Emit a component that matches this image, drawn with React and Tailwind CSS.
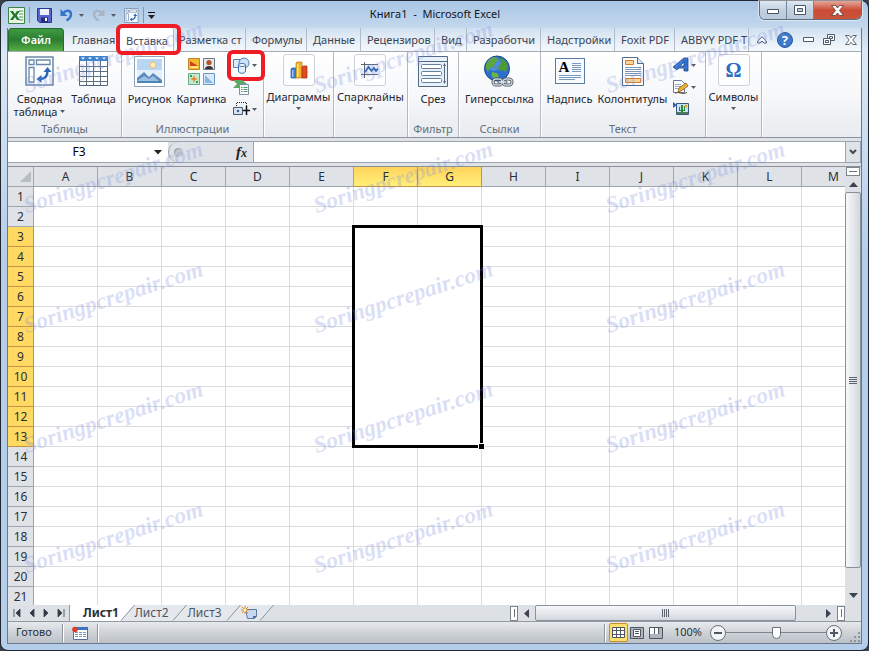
import React from 'react';
import clsx from 'clsx';

const columns = ['A', 'B', 'C', 'D', 'E', 'F', 'G', 'H', 'I', 'J', 'K', 'L', 'M'];
const rows = Array.from({ length: 21 }, (_, i) => i + 1);

const tabs = [
    { label: 'Главная', width: 'w-14 pl-2' },
    { label: 'Вставка', width: 'w-[54px] pl-[6px]', active: true },
    { label: 'Разметка ст', width: 'w-[72px] pl-[5px]' },
    { label: 'Формулы', width: 'w-[61px] pl-[6px]' },
    { label: 'Данные', width: 'w-[54px] pl-[6px]' },
    { label: 'Рецензиров', width: 'w-[74px] pl-[6px]' },
    { label: 'Вид', width: 'w-8 pl-[6px]' },
    { label: 'Разработчи', width: 'w-[74px] pl-[6px]' },
    { label: 'Надстройки', width: 'w-[74px] pl-[6px]' },
    { label: 'Foxit PDF', width: 'w-[60px] pl-[6px]' },
    { label: 'ABBYY PDF T', width: 'w-[74px] pl-[6px]' },
];

const watermarks = [92, 212, 332, 452, 572].flatMap(top => [25, 315, 607].map(left => ({ top, left })));

function Caret({ className }) {
    return (
        <svg viewBox="0 0 5 3" className={clsx('w-[5px] h-[3px] shrink-0', className)} fill="#555c66">
            <path d="M0 0h5L2.500 3z" />
        </svg>
    );
}

function ExcelIcon() {
    return (
        <svg width="17" height="17" viewBox="0 0 17 17">
            <path d="M.5.5h16v16H.5z" fill="#e6f4e3" stroke="#3d8446" />
            <path d="M10 2h5v13h-5z" fill="#fff" />
            <path d="M11 4h4M11 7h4M11 10h4M11 13h4" stroke="#7ab880" strokeWidth="1.500" />
            <path d="M2 4h3l2 3 2-3h3L8.700 8.500 12 13H9l-2-3-2 3H2l3.300-4.500z" fill="#1e7a2c" />
        </svg>
    );
}

function SaveIcon() {
    return (
        <svg width="15" height="15" viewBox="0 0 15 15">
            <path d="M.5.5h14v14h-12l-2-2z" fill="#5a62d0" stroke="#2c3590" />
            <path d="M3 1h9v6H3z" fill="#eef3fb" />
            <path d="M4 9.500h7V14H4z" fill="#26306f" />
            <path d="M8 10h2v3H8z" fill="#fff" />
        </svg>
    );
}

function UndoIcon({ color, flip }) {
    return (
        <svg width="13" height="14" viewBox="0 0 13 14" fill="none">
            <g transform={flip ? 'translate(13 0) scale(-1 1)' : undefined}>
                <path d="M3 5.500C6 1.500 11 2 11 6.500c0 3-2 4.500-4.500 6" stroke={color} strokeWidth="2.400" />
                <path d="M.5 1v7h7z" fill={color} />
            </g>
        </svg>
    );
}

function PivotIcon({ size }) {
    return (
        <svg width={size} height={size} viewBox="0 0 30 30" fill="none">
            <path d="M1 1h27v28H1z" fill="#fafcff" stroke="#6b87a8" strokeWidth="1.500" />
            <path d="M4 4h5v4.500H4zM11.500 4H25v4.500H11.500zM4 11.500h5V26H4z" fill="#fff" stroke="#6b87a8" strokeWidth="1.300" />
            <path d="M15 23c5 0 7.500-3 7.500-8" stroke="#2d66b8" strokeWidth="2.400" />
            <path d="M18.500 16l4-5 4 5zM16.500 19l-5 4 5 4z" fill="#2d66b8" />
        </svg>
    );
}

function TableIcon() {
    return (
        <svg width="31" height="32" viewBox="0 0 31 32">
            <path d="M1.500 1.500h28v29h-28z" fill="#fff" stroke="#51677f" />
            <path d="M1 1h29v5H1z" fill="#3f83cf" />
            <path d="M1.500 11.500h28M1.500 16.500h28M1.500 21.500h28M1.500 26.500h28M8.500 6v24M15.500 6v24M22.500 6v24" stroke="#5d7084" />
            <path d="M3 2.500h4l-2 2zM10 2.500h4l-2 2zM17 2.500h4l-2 2zM24 2.500h4l-2 2z" fill="#fff" />
        </svg>
    );
}

function PictureIcon() {
    return (
        <svg width="31" height="31" viewBox="0 0 31 31">
            <path d="M.5.5h30v30H.5z" fill="#fff" stroke="#8fa3b8" />
            <path d="M3 3h25v22H3z" fill="#b9d6f3" />
            <path d="M3 14h25v11H3z" fill="#e3effa" />
            <circle cx="19" cy="9" r="3" fill="#fff3c4" stroke="#f2b661" />
            <path d="M3 22l7-6 5 5 4-4 9 7v1H3z" fill="#5c8cbd" />
            <path d="M3 25l7-5 5 3 4-3 6 5z" fill="#9dc0e0" />
            <path d="M3 25h25v2H3z" fill="#4a87b8" />
        </svg>
    );
}

function ClipArtIcon() {
    return (
        <svg width="27" height="27" viewBox="0 0 27 27">
            <path d="M.5.5h11v11H.5z" fill="#f7ba2e" stroke="#bb8424" />
            <path d="M2 3l8 5H2z" fill="#d2401f" />
            <path d="M2 9h8" stroke="#ffe27d" strokeWidth="2" />
            <path d="M15.500.5h11v11h-11z" fill="#e4e7ec" stroke="#6c7684" />
            <circle cx="21" cy="4.500" r="2.600" fill="#b6522a" />
            <path d="M17 11c0-4 8-4 8 0z" fill="#3a3029" />
            <path d="M.5 15.500h11v11H.5z" fill="#c6ead0" stroke="#67a98a" />
            <path d="M6 17l1 3 3 1-3 1-1 3-1-3-3-1 3-1z" fill="#f08127" />
            <path d="M2 17h2v2H2zM8 23h2v2H8z" fill="#2e9e54" />
            <path d="M15.500 15.500h11v11h-11z" fill="#d8eafb" stroke="#6d96c5" />
            <path d="M17 17l8 8h-8z" fill="#8ab6e6" />
        </svg>
    );
}

function ShapesIcon() {
    return (
        <svg width="17" height="17" viewBox="0 0 17 17">
            <path d="M.5 2.500h9v8h-9z" fill="#dbe9f8" stroke="#5580b3" />
            <circle cx="11" cy="6" r="5" fill="#cfe1f5" stroke="#5580b3" />
            <path d="M5.500 8v6c0 3 7 3 7 0V8z" fill="#e4effb" stroke="#4172ad" />
            <ellipse cx="9" cy="8" rx="3.500" ry="1.500" fill="#fff" stroke="#4172ad" />
        </svg>
    );
}

function SmartArtIcon() {
    return (
        <svg width="17" height="16" viewBox="0 0 17 16">
            <path d="M0 1h9l5 4-5 4H0l4-4z" fill="#5ca868" />
            <path d="M6.500 5.500h9v10h-9z" fill="#fff" stroke="#8292a6" />
            <path d="M8 8.500h1.500M8 10.500h1.500M8 12.500h1.500M10.500 8.500h4M10.500 10.500h4M10.500 12.500h4" stroke="#4d9460" />
        </svg>
    );
}

function ScreenshotIcon() {
    return (
        <svg width="17" height="14" viewBox="0 0 17 14">
            <path d="M3.500 4V.5h10V4" fill="none" stroke="#222" strokeDasharray="1 1" />
            <path d="M.5 5.500h9v7h-9z" fill="#d5dfea" stroke="#4b5d73" />
            <circle cx="5" cy="9" r="2" fill="#3c65a0" stroke="#fff" />
            <path d="M13.500 4v9M10 8.500h7" stroke="#111" strokeWidth="1.500" />
        </svg>
    );
}

function ChartIcon() {
    return (
        <svg width="18" height="18" viewBox="0 0 18 18">
            <path d="M1 8l1-1h4v10H1z" fill="#3a7bd5" stroke="#245aa5" strokeWidth=".7" />
            <path d="M6 2l1-1h5v16H6z" fill="#f0b428" stroke="#b27a12" strokeWidth=".7" />
            <path d="M7 3h1.500v13H7z" fill="#ffe27c" />
            <path d="M12 6l1-1h4v12h-5z" fill="#e04b20" stroke="#a22c10" strokeWidth=".7" />
            <path d="M2 9h1.500v7H2z" fill="#9cc4f4" />
        </svg>
    );
}

function SparklineIcon() {
    return (
        <svg width="18" height="16" viewBox="0 0 18 16" fill="none">
            <path d="M4 2h13v10H4z" fill="#eaf2fb" />
            <path d="M3.500 0v16M0 2.500h17M0 12.500h17" stroke="#5b6674" />
            <path d="M4 10l3.500-5 3 4 2.500-3 2 3 2-2.500" stroke="#2963b5" strokeWidth="1.700" />
        </svg>
    );
}

function SlicerIcon() {
    return (
        <svg width="30" height="31" viewBox="0 0 30 31" fill="none">
            <path d="M.5.5h29v30H.5z" fill="#e8f0f9" stroke="#536b88" />
            <path d="M1 5.500h28" stroke="#536b88" />
            <rect x="3.500" y="8.500" width="20" height="4" rx="1" fill="#fff" stroke="#6480a1" />
            <rect x="3.500" y="15.500" width="20" height="4" rx="1" fill="#fff" stroke="#6480a1" />
            <rect x="3.500" y="22.500" width="20" height="4" rx="1" fill="#fff" stroke="#6480a1" />
            <path d="M26.500 9v17" stroke="#536b88" />
            <path d="M25 10l1.500-3 1.500 3zM25 25l1.500 3 1.500-3z" fill="#536b88" />
        </svg>
    );
}

function GlobeIcon() {
    return (
        <svg width="32" height="32" viewBox="0 0 32 32">
            <circle cx="14" cy="13.500" r="12.500" fill="#2d6fcf" stroke="#1d4684" />
            <circle cx="11" cy="9" r="7" fill="#6ba7ef" opacity=".5" />
            <path d="M3 10c2-5 6-8 10-8l2 3-3 3-1 4-4 1-2 4c-2-2-2-5-2-7z" fill="#5ca63c" />
            <path d="M17 3c4 1 7 4 8 8l-2 6-4-2-3 1-1-4 3-3z" fill="#4f9a34" />
            <path d="M9 17l5 1 2 3-3 4c-3-1-5-4-4-8z" fill="#6ab548" />
            <g fill="none" strokeLinecap="round">
                <rect x="10" y="24" width="9" height="6" rx="3" stroke="#46515e" strokeWidth="3" />
                <rect x="20" y="24" width="9" height="6" rx="3" stroke="#46515e" strokeWidth="3" />
                <path d="M16 27h7" stroke="#46515e" strokeWidth="3" />
                <rect x="10" y="24" width="9" height="6" rx="3" stroke="#c9d3de" strokeWidth="1.300" />
                <rect x="20" y="24" width="9" height="6" rx="3" stroke="#c9d3de" strokeWidth="1.300" />
                <path d="M16 27h7" stroke="#e3e9f0" strokeWidth="1.300" />
            </g>
        </svg>
    );
}

function TextBoxIcon() {
    return (
        <span className="w-[30px] h-[26px] bg-[#f7faff] border border-[#5b7a9e] relative block">
            <span className="absolute left-[3px] top-0 font-['Liberation_Serif',serif] font-bold text-[15px] leading-4 text-black">A</span>
            <svg width="28" height="24" viewBox="0 0 28 24" stroke="#7b9ac0" className="block">
                <path d="M16 4.500h9M16 6.500h9M16 8.500h9M16 10.500h9M16 12.500h9M3 16.500h22M3 18.500h22M3 20.500h16" />
            </svg>
        </span>
    );
}

function HeaderFooterIcon() {
    return (
        <svg width="22" height="29" viewBox="0 0 22 29">
            <path d="M.5.5h15l6 6v22H.5z" fill="#fff" stroke="#51698a" />
            <path d="M15.500.5v6h6" fill="#d9e5f3" stroke="#51698a" />
            <path d="M3.500 3.500h8v4h-8zM3.500 21.500h15v4h-15z" fill="#fbd49b" stroke="#d97a1c" />
            <path d="M3 10.500h16M3 12.500h16M3 14.500h16M3 16.500h16M3 18.500h16" stroke="#7f97b5" />
        </svg>
    );
}

function WordArtIcon() {
    return (
        <svg width="16" height="16" viewBox="0 0 16 16">
            <path d="M0 10L11 1h4v13h-4v-3H6l-2 2zM11 5L7 9h4z" fill="#2f70cc" fillRule="evenodd" stroke="#1b478c" strokeWidth=".8" />
        </svg>
    );
}

function SignatureIcon() {
    return (
        <svg width="16" height="15" viewBox="0 0 16 15">
            <path d="M.5.500h8l3 3v9H.5z" fill="#fff" stroke="#647a96" />
            <path d="M2 4.500h6M2 6.500h7M2 8.500h5" stroke="#9aacc2" />
            <path d="M5 12l1-4 7-5 2 3-7 5z" fill="#efb33b" stroke="#8a5a18" strokeWidth=".8" />
            <path d="M2 13.500c4-3 6 2 12-1" stroke="#6b4a3a" fill="none" />
        </svg>
    );
}

function ObjectIcon() {
    return (
        <svg width="16" height="14" viewBox="0 0 16 14">
            <path d="M3.500 1.500h12v11h-12z" fill="#c7e2f4" stroke="#3d5876" />
            <path d="M0 0l4 3-4 3z" fill="#2d62b8" />
            <path d="M8 3h2v8H8zM6 5h1v3h4V4h1v5H6z" fill="#278a3b" />
            <circle cx="13" cy="4" r="1.500" fill="#f0a62c" />
            <path d="M4 10h11v2H4z" fill="#4c7a5a" />
        </svg>
    );
}

function NewSheetIcon() {
    return (
        <svg width="16" height="14" viewBox="0 0 16 14">
            <path d="M4.500 3.500h11v7l-2 2h-7z" fill="#c7d9f0" stroke="#5c79a0" />
            <path d="M12 13v-3h4z" fill="#466ca3" />
            <path d="M4 0v8M0 4h8M1 1l6 6M7 1L1 7" stroke="#e08a1d" />
            <circle cx="4" cy="4" r="1.600" fill="#fff3c6" />
        </svg>
    );
}

function MacroIcon() {
    return (
        <svg width="16" height="14" viewBox="0 0 16 14">
            <path d="M1.500 1.500h14v12h-14z" fill="#fff" stroke="#53719c" />
            <path d="M1 1h15v3H1z" fill="#3b74c2" />
            <path d="M3 6.500h3M7 6.500h3M11 6.500h3M3 8.500h3M7 8.500h3M11 8.500h3M3 10.500h3M7 10.500h3M11 10.500h3" stroke="#7a96be" />
            <circle cx="3" cy="3.500" r="2.800" fill="#d9402c" />
        </svg>
    );
}

function LargeButton({ icon, label, caret, boxed, className }) {
    return (
        <button className={clsx('flex flex-col items-center shrink-0 whitespace-nowrap text-[#1f2630]', className)}>
            <span
                className={clsx(
                    'flex items-center justify-center mt-[2px] mb-1',
                    boxed ? 'w-8 h-8 rounded-[3px] border border-[#cdd1d8] bg-white/70' : 'h-[34px]'
                )}
            >
                {icon}
            </span>
            <span className="leading-[13px]">{label}</span>
            {caret && <Caret className="mt-1" />}
        </button>
    );
}

function SmallButton({ icon, label, caret, marked }) {
    return (
        <button aria-label={label} className="relative flex items-center gap-[2px] h-[22px]">
            {icon}
            {caret && <Caret />}
            {marked && <span className="absolute -left-[6px] -top-1 w-[38px] h-[31px] rounded-md border-4 border-[#ee1c25]" />}
        </button>
    );
}

function Group({ title, className, children }) {
    return (
        <section className={clsx('flex flex-col shrink-0 border-r border-[#b4b9c1] shadow-[1px_0_0_#fff]', className)}>
            <div className="flex-1 flex justify-center">{children}</div>
            <div className="h-4 leading-4 text-center text-[#646e7c]">{title}</div>
        </section>
    );
}

function TitleBar() {
    return (
        <header className="h-[27px] flex items-start shrink-0">
            <div className="flex-1 flex items-center h-7 pl-px">
                <button aria-label="Excel"><ExcelIcon /></button>
                <span className="w-px h-4 bg-[#8797aa] mx-1" />
                <button aria-label="Сохранить" className="ml-[3px]"><SaveIcon /></button>
                <button aria-label="Отменить" className="ml-2 flex items-center gap-[6px]">
                    <UndoIcon color="#3773c9" /> <Caret />
                </button>
                <button aria-label="Вернуть" className="ml-2 flex items-center gap-[6px]">
                    <UndoIcon color="#a9b5c4" flip /> <Caret />
                </button>
                <button aria-label="Сводная таблица" className="ml-2"><PivotIcon size="15" /></button>
                <span className="w-px h-4 bg-[#8797aa] ml-1" />
                <button aria-label="Настройка панели" className="ml-1 flex flex-col items-center gap-[2px]">
                    <span className="w-[7px] h-px bg-black" />
                    <svg width="7" height="4" viewBox="0 0 7 4"><path d="M0 0h7L3.500 4z" fill="#222" /></svg>
                </button>
            </div>
            <h1 className="text-[11px] leading-[26px] text-[#10151c] whitespace-pre">Книга1  -  Microsoft Excel</h1>
            <div className="flex-1 flex justify-end">
                <div className="flex h-[19px] rounded-b-md border border-t-0 border-[#5d6d80] overflow-hidden shadow-[0_0_0_1px_#ffffff80]">
                    <button aria-label="Свернуть" className="w-[27px] flex items-center justify-center border-r border-[#74859a] bg-linear-to-b from-[#dfe8f2] via-[#c2d0e0] to-[#b9c9dc]">
                        <svg width="12" height="12" viewBox="0 0 12 12"><path d="M.5 5.500h11v4H.5z" fill="#fff" stroke="#4a5565" /></svg>
                    </button>
                    <button aria-label="Развернуть" className="w-[27px] flex items-center justify-center border-r border-[#74859a] bg-linear-to-b from-[#dfe8f2] via-[#c2d0e0] to-[#b9c9dc]">
                        <svg width="12" height="10" viewBox="0 0 12 10"><path fillRule="evenodd" d="M.5.5h11v9H.5zM3.500 3.500v3h5v-3z" fill="#fff" stroke="#4a5565" /></svg>
                    </button>
                    <button aria-label="Закрыть" className="w-[47px] flex items-center justify-center bg-linear-to-b from-[#e5a79b] via-[#cb4b35] to-[#c8543b]">
                        <svg width="13" height="11" viewBox="0 0 13 11"><path d="M.5.5h4l2 2.500 2-2.500h4l-4 5 4 5h-4l-2-2.500-2 2.500h-4l4-5z" fill="#fff" stroke="#5b3a3a" strokeWidth=".8" /></svg>
                    </button>
                </div>
            </div>
        </header>
    );
}

function TabBar() {
    return (
        <nav className="h-6 flex shrink-0 bg-linear-to-b from-white/20 to-white/70 border-b border-[#a5acb6] text-[#3b4450]">
            <button className="w-14 shrink-0 rounded-t-[4px] border border-b-0 border-[#256b2e] bg-linear-to-b from-[#3f9a42] via-[#2a7d31] to-[#57ae45] text-white text-center font-semibold">
                Файл
            </button>
            {tabs.map(tab => (
                <button
                    key={tab.label}
                    className={clsx(
                        'relative shrink-0 pt-[2px] text-left whitespace-nowrap border-r border-[#b3bcc8]',
                        tab.width,
                        tab.active && '-mb-px bg-white rounded-t-[3px]'
                    )}
                >
                    {tab.label}
                    {tab.active && <span className="absolute z-10 -left-1 -top-1 w-[65px] h-[31px] rounded-md border-4 border-[#ee1c25]" />}
                </button>
            ))}
            <div className="flex-1 flex items-center justify-between pl-2 pr-1">
                <button aria-label="Свернуть ленту">
                    <svg width="10" height="8" viewBox="0 0 10 8"><path d="M.7 5L5 .8 9.300 5v2H7L5 5 3 7H.7z" fill="#fff" stroke="#4d5a6a" /></svg>
                </button>
                <button aria-label="Справка" className="w-4 h-4 rounded-full bg-[#3f79c9] border border-[#2a5ba3] text-white font-bold text-[13px] leading-[14px]">?</button>
                <button aria-label="Свернуть книгу">
                    <svg width="11" height="5" viewBox="0 0 11 5"><path d="M.5.5h10v4H.5z" fill="#fff" stroke="#4d5a6a" /></svg>
                </button>
                <button aria-label="Восстановить книгу">
                    <svg width="12" height="11" viewBox="0 0 12 11" fill="#fff" stroke="#4d5a6a"><path d="M4.500.5h7v6h-7zM6.500 2.500h3v2h-3z" /><path d="M.5 4.500h7v6h-7zM2.500 6.500h3v2h-3z" /></svg>
                </button>
                <button aria-label="Закрыть книгу">
                    <svg width="12" height="10" viewBox="0 0 13 11"><path d="M.5.5h4l2 2.500 2-2.500h4l-4 5 4 5h-4l-2-2.500-2 2.500h-4l4-5z" fill="#fff" stroke="#4d5a6a" /></svg>
                </button>
            </div>
        </nav>
    );
}

function Ribbon() {
    return (
        <div className="h-[86px] flex shrink-0 bg-linear-to-b from-white via-[#f6f8fa] to-[#e8ebef] border-b border-[#8c929b]">
            <Group title="Таблицы" className="w-[114px]">
                <LargeButton
                    className="w-[58px]"
                    icon={<PivotIcon size="30" />}
                    label={<>Сводная<br /><span className="inline-flex items-center gap-[3px]">таблица <Caret /></span></>}
                />
                <LargeButton className="w-[50px]" icon={<TableIcon />} label="Таблица" />
            </Group>
            <Group title="Иллюстрации" className="w-[142px]">
                <LargeButton className="w-[50px]" icon={<PictureIcon />} label="Рисунок" />
                <LargeButton className="w-[54px]" icon={<ClipArtIcon />} label="Картинка" />
                <div className="flex flex-col pt-[2px] pl-1 pr-[4px]">
                    <SmallButton icon={<ShapesIcon />} label="Фигуры" caret marked />
                    <SmallButton icon={<SmartArtIcon />} label="SmartArt" />
                    <SmallButton icon={<ScreenshotIcon />} label="Снимок" caret />
                </div>
            </Group>
            <Group className="w-[70px]">
                <LargeButton boxed icon={<ChartIcon />} label="Диаграммы" caret />
            </Group>
            <Group className="w-[74px]">
                <LargeButton boxed icon={<SparklineIcon />} label="Спарклайны" caret />
            </Group>
            <Group title="Фильтр" className="w-[51px]">
                <LargeButton icon={<SlicerIcon />} label="Срез" />
            </Group>
            <Group title="Ссылки" className="w-[82px]">
                <LargeButton icon={<GlobeIcon />} label="Гиперссылка" />
            </Group>
            <Group title="Текст" className="w-[165px]">
                <LargeButton className="w-[50px]" icon={<TextBoxIcon />} label="Надпись" />
                <LargeButton className="w-[76px]" icon={<HeaderFooterIcon />} label="Колонтитулы" />
                <div className="flex flex-col pt-[2px] pl-[2px] pr-[6px]">
                    <SmallButton icon={<WordArtIcon />} label="WordArt" caret />
                    <SmallButton icon={<SignatureIcon />} label="Подпись" caret />
                    <SmallButton icon={<ObjectIcon />} label="Объект" />
                </div>
            </Group>
            <Group className="w-14">
                <LargeButton
                    boxed
                    icon={<span className="font-['Liberation_Serif',serif] font-bold text-[20px] leading-5 text-[#2b6cc4]">Ω</span>}
                    label="Символы"
                    caret
                />
            </Group>
        </div>
    );
}

function FormulaBar() {
    return (
        <div className="shrink-0 bg-[#dfe3e8] py-[3px] border-b border-[#8b9099]">
            <div className="flex h-[22px] border-y border-[#9aa3b0]">
                <label className="flex items-center w-40 bg-white pr-[5px]">
                    <input aria-label="Имя" defaultValue="F3" className="w-[142px] text-center text-[12px] text-black outline-none" />
                    <svg width="8" height="5" viewBox="0 0 8 5" className="ml-1"><path d="M0 0h8L4 4.500z" fill="#222" /></svg>
                </label>
                <div className="w-[85px] flex items-center justify-between rounded-l-full border-l border-[#9aa3b0] bg-[#dfe3e8] pl-[5px] pr-[6px]">
                    <span className="w-[9px] h-[9px] rounded-full bg-[#c3c8cf] shadow-[inset_1px_1px_1px_#9fa5ad]" />
                    <button aria-label="Вставить функцию" className="font-['Liberation_Serif',serif] italic font-bold text-[15px] leading-4 text-[#222]">
                        f<span className="text-[12px]">x</span>
                    </button>
                </div>
                <input aria-label="Строка формул" className="flex-1 min-w-0 bg-white border-l border-[#9aa3b0] outline-none" />
                <button aria-label="Развернуть строку" className="w-4 flex items-center justify-center border-x border-[#9aa3b0] bg-[#dfe3e8]">
                    <svg width="8" height="6" viewBox="0 0 8 6" fill="none"><path d="M1 1l3 3 3-3" stroke="#444b55" strokeWidth="2" /></svg>
                </button>
            </div>
        </div>
    );
}

function Sheet() {
    return (
        <div className="flex-1 min-w-0 relative overflow-hidden bg-white">
            <table className="table-fixed border-separate border-spacing-0 w-[858px] text-[#2b2f36] text-[12px] leading-[19px]">
                <thead>
                    <tr className="h-5">
                        <th className="w-[26px] p-0 bg-[#dfe3e8] border-r border-b border-[#a0a5ad]">
                            <svg width="11" height="11" viewBox="0 0 11 11" className="ml-[12px]"><path d="M11 0v11H0z" fill="#b7bcc3" /></svg>
                        </th>
                        {columns.map(col => (
                            <th
                                key={col}
                                className={clsx(
                                    'w-16 p-0 h-5 font-normal border-r border-b',
                                    col === 'F' || col === 'G'
                                        ? 'bg-linear-to-b from-[#ffd35c] to-[#fff07a] border-[#c39443]'
                                        : 'bg-[#dfe3e8] border-[#a0a5ad]'
                                )}
                            >
                                {col}
                            </th>
                        ))}
                    </tr>
                </thead>
                <tbody>
                    {rows.map(row => (
                        <tr key={row} className="h-5">
                            <th
                                className={clsx(
                                    'p-0 h-5 font-normal border-r border-b',
                                    row >= 3 && row <= 13 ? 'bg-[#ffd961] border-[#c39443]' : 'bg-[#dfe3e8] border-[#a0a5ad]'
                                )}
                            >
                                {row}
                            </th>
                            {columns.map(col => (
                                <td key={col} className="p-0 border-r border-b border-[#dadcdd]" />
                            ))}
                        </tr>
                    ))}
                </tbody>
            </table>
            {/* selected range F3:G13 */}
            <div className="absolute left-[344px] top-[58px] w-[131px] h-[223px] border-3 border-black bg-white">
                <span className="absolute -right-[5px] -bottom-[5px] w-[7px] h-[7px] bg-black border border-white" />
            </div>
        </div>
    );
}

function VerticalScroll() {
    return (
        <div className="w-4 shrink-0 flex flex-col items-center bg-[#dde1e6]">
            <div className="w-[14px] h-[9px] border border-[#7e848d] bg-white flex items-center justify-center">
                <span className="w-2 h-px bg-[#6a717b]" />
            </div>
            <button aria-label="Вверх" className="h-4 flex items-center">
                <svg width="9" height="5" viewBox="0 0 9 5"><path d="M0 5h9L4.500 0z" fill="#3c4350" /></svg>
            </button>
            <div className="w-full flex-1 rounded-[2px] border border-[#8b9199] bg-linear-to-r from-[#f7f8fa] to-[#d3d8df] flex flex-col items-center justify-center gap-px">
                <span className="w-2 h-px bg-[#5c636d]" />
                <span className="w-2 h-px bg-[#5c636d]" />
                <span className="w-2 h-px bg-[#5c636d]" />
                <span className="w-2 h-px bg-[#5c636d]" />
            </div>
            <button aria-label="Вниз" className="h-[37px] pt-[18px] flex items-center">
                <svg width="9" height="5" viewBox="0 0 9 5"><path d="M0 0h9L4.500 5z" fill="#3c4350" /></svg>
            </button>
        </div>
    );
}

function Slash({ left, right }) {
    return (
        <svg width="15" height="16" viewBox="0 0 15 16" className="shrink-0">
            <path d="M0 0h15v16H0z" fill={right} />
            <path d="M0 0h14L1 16H0z" fill={left} />
            <path d="M14.500 0L1 15.500" stroke="#8b929c" />
        </svg>
    );
}

function SheetTabs() {
    const arrows = [
        ['Первый лист', 'M1 0v8M7 0v8L3 4z'],
        ['Предыдущий лист', 'M6 0v8L2 4z'],
        ['Следующий лист', 'M2 0v8l4-4z'],
        ['Последний лист', 'M1 0v8l4-4zM7 0v8'],
    ];
    return (
        <div className="h-4 shrink-0 flex bg-[#dde1e6] border-b border-[#9299a3] box-content">
            <div className="w-[62px] flex items-center justify-between border-r border-[#9299a3] pr-1 pl-[5px]">
                {arrows.map(([label, d]) => (
                    <button key={label} aria-label={label}>
                        <svg width="8" height="8" viewBox="0 0 8 8"><path d={d} fill="#343b47" stroke="#343b47" strokeWidth=".8" /></svg>
                    </button>
                ))}
            </div>
            <button className="w-[50px] bg-white text-right pr-px text-[12px] leading-4 font-bold text-[#2b3038]">Лист1</button>
            <Slash left="#fff" right="#e4e8ec" />
            <button className="w-[37px] bg-[#e4e8ec] text-[12px] leading-4 text-[#4e5661] flex justify-center pr-1">Лист2</button>
            <Slash left="#e4e8ec" right="#e4e8ec" />
            <button className="w-[39px] bg-[#e4e8ec] text-[12px] leading-4 text-[#4e5661] flex justify-center pr-1">Лист3</button>
            <Slash left="#e4e8ec" right="#e4e8ec" />
            <button aria-label="Вставить лист" className="w-[18px] bg-[#e4e8ec]"><NewSheetIcon /></button>
            <Slash left="#e4e8ec" right="#dde1e6" />
            <div className="flex-1" />
            <div className="w-[351px] flex items-center">
                <span className="w-2 h-[15px] border border-[#7e848d] bg-white flex items-center justify-center"><span className="w-px h-2 bg-[#6a717b]" /></span>
                <button aria-label="Влево" className="w-[17px] flex justify-center">
                    <svg width="5" height="9" viewBox="0 0 5 9"><path d="M5 0v9L0 4.500z" fill="#3c4350" /></svg>
                </button>
                <div className="w-[261px] h-4 rounded-[2px] border border-[#8b9199] bg-linear-to-b from-[#f7f8fa] to-[#d3d8df] flex items-center justify-center gap-px">
                    <span className="h-2 w-px bg-[#5c636d]" />
                    <span className="h-2 w-px bg-[#5c636d]" />
                    <span className="h-2 w-px bg-[#5c636d]" />
                    <span className="h-2 w-px bg-[#5c636d]" />
                </div>
                <button aria-label="Вправо" className="flex-1 flex justify-end pr-[6px]">
                    <svg width="5" height="9" viewBox="0 0 5 9"><path d="M0 0v9l5-4.500z" fill="#3c4350" /></svg>
                </button>
                <span className="w-2 h-[15px] mr-4 border border-[#7e848d] bg-white flex items-center justify-center"><span className="w-px h-2 bg-[#6a717b]" /></span>
            </div>
        </div>
    );
}

function StatusBar() {
    return (
        <footer className="h-[21px] shrink-0 flex items-center bg-linear-to-b from-[#e7eaed] via-[#cfd3d8] to-[#bcc1c7] text-[#2c333d]">
            <span className="w-[54px] pl-2">Готово</span>
            <span className="w-px h-[18px] bg-[#8e949d] shadow-[1px_0_0_#fff]" />
            <button aria-label="Запись макроса" className="ml-[9px] mr-[9px]"><MacroIcon /></button>
            <span className="w-px h-[18px] bg-[#8e949d] shadow-[1px_0_0_#fff]" />
            <div className="flex-1" />
            <span className="w-px h-[18px] bg-[#8e949d] shadow-[1px_0_0_#fff]" />
            <button aria-label="Обычный" className="ml-1 w-[19px] h-[19px] flex items-center justify-center rounded-[2px] border border-[#c58f2b] bg-[#ffdf6b]">
                <svg width="13" height="11" viewBox="0 0 13 11"><path d="M.5.5h12v10H.5zM.5 3.500h12M.5 7.500h12M4.500.5v10M8.500.5v10" fill="#fff" stroke="#4f5763" /></svg>
            </button>
            <button aria-label="Разметка страницы" className="ml-[2px]">
                <svg width="14" height="12" viewBox="0 0 14 12"><path d="M.5.5h13v11H.5z" fill="#aeb4bc" stroke="#4f5763" /><path d="M3.500 2.500h7v7h-7z" fill="#fff" stroke="#4f5763" /><path d="M5 4.500h4M5 6.500h4" stroke="#4f5763" /></svg>
            </button>
            <button aria-label="Страничный" className="ml-[5px]">
                <svg width="14" height="12" viewBox="0 0 14 12"><path d="M.5.5h13v11H.5z" fill="#aeb4bc" stroke="#4f5763" /><path d="M1 1h4v6H1zM6 1h3v6H6z" fill="#fff" /><path d="M5.500 0v7M9.500 0v7" stroke="#4f5763" /></svg>
            </button>
            <button className="w-[47px] text-right pr-2">100%</button>
            <button aria-label="Уменьшить" className="w-4 h-4 rounded-full border border-[#69717d] bg-[#f1f3f5] flex items-center justify-center">
                <span className="w-2 h-[2px] bg-[#4f5763]" />
            </button>
            <input
                type="range"
                aria-label="Масштаб"
                defaultValue="50"
                className="w-[100px] h-3 appearance-none bg-[linear-gradient(#7c848f,#7c848f)] bg-[length:100%_1px] bg-center bg-no-repeat [&::-webkit-slider-thumb]:appearance-none [&::-webkit-slider-thumb]:w-[9px] [&::-webkit-slider-thumb]:h-3 [&::-webkit-slider-thumb]:bg-white [&::-webkit-slider-thumb]:border [&::-webkit-slider-thumb]:border-[#69717d] [&::-webkit-slider-thumb]:rounded-b-full"
            />
            <button aria-label="Увеличить" className="w-4 h-4 rounded-full border border-[#69717d] bg-[#f1f3f5] flex items-center justify-center">
                <svg width="8" height="8" viewBox="0 0 8 8"><path d="M4 0v8M0 4h8" stroke="#4f5763" strokeWidth="2" /></svg>
            </button>
            <svg width="11" height="11" viewBox="0 0 11 11" className="ml-2 self-end" fill="#8e959e">
                <path d="M8 0h2v2H8zM4 4h2v2H4zM8 4h2v2H8zM0 8h2v2H0zM4 8h2v2H4zM8 8h2v2H8z" />
            </svg>
        </footer>
    );
}

export default function App() {
    return (
        <div className="relative h-screen overflow-hidden bg-[#3b3f4a] font-['Noto_Sans',sans-serif] text-[11px]">
            <div className="h-full flex flex-col px-[6px] pb-[6px] rounded-lg border border-[#20252e] bg-linear-to-b from-[#a9c6e5] from-0% via-[#dce8f4] via-8% to-[#b3cdeb] to-40%">
                <TitleBar />
                <div className="flex-1 min-h-0 flex flex-col border border-t-0 border-[#69788b]">
                    <TabBar />
                    <Ribbon />
                    <FormulaBar />
                    <div className="flex-1 min-h-0 flex">
                        <Sheet />
                        <VerticalScroll />
                    </div>
                    <SheetTabs />
                    <StatusBar />
                </div>
            </div>
            {watermarks.map(({ top, left }) => (
                <span
                    key={`${top}-${left}`}
                    className="absolute -rotate-18 origin-bottom-left pointer-events-none select-none whitespace-nowrap font-['Liberation_Serif',serif] italic font-bold text-[23px] leading-6 text-[#8090dc]/30"
                    style={{ top: top - 18, left: left + 3 }}
                >
                    Soringpcrepair.com
                </span>
            ))}
        </div>
    );
}
